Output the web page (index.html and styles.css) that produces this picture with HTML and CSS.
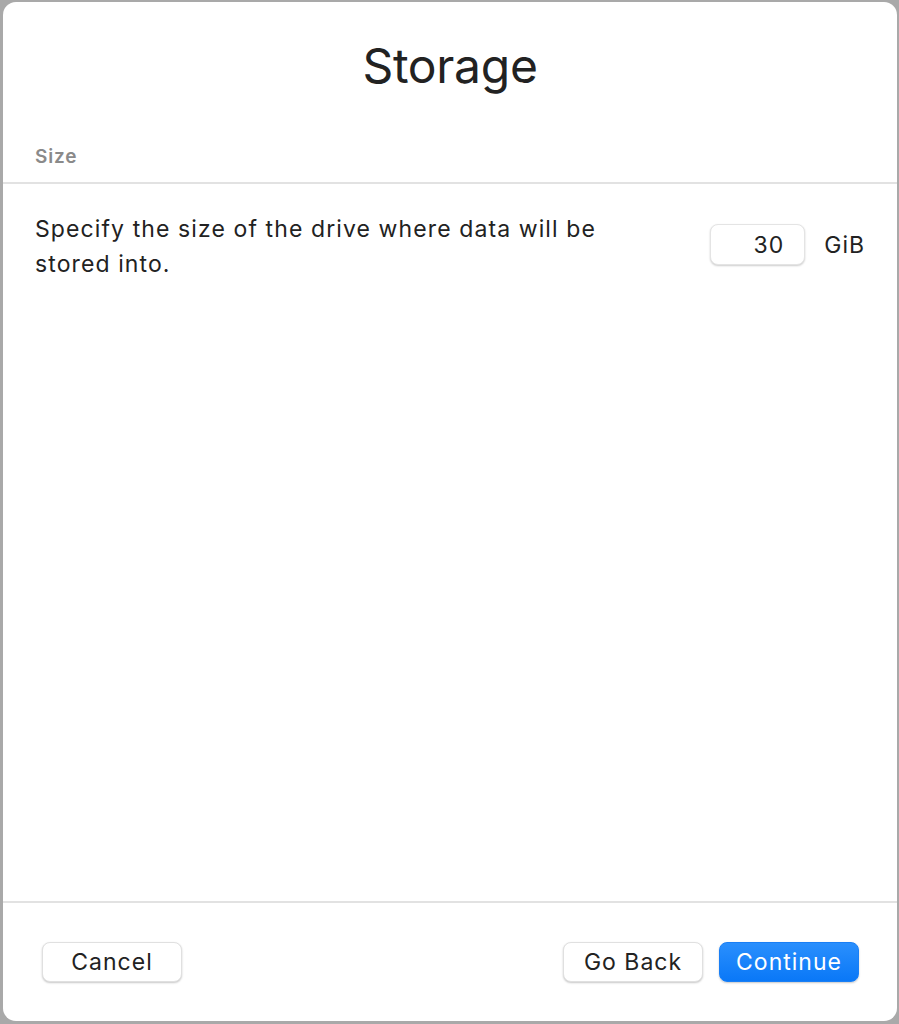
FILE: index.html
```html
<!DOCTYPE html>
<html lang="en">
<head>
    <meta charset="UTF-8">
    <meta name="viewport" content="width=device-width, initial-scale=1.0">
    <title>Storage</title>
    <link rel="stylesheet" href="styles.css">
</head>
<body>
    <div class="window">
        <h1 class="title">Storage</h1>

        <div class="section-label">Size</div>

        <div class="setting-row">
            <p class="setting-text">Specify the size of the drive where data will be stored into.</p>
            <div class="size-field">
                <input class="size-input" type="text" value="30">
                <span class="size-unit">GiB</span>
            </div>
        </div>

        <div class="spacer"></div>

        <div class="footer">
            <button class="btn">Cancel</button>
            <div class="footer-right">
                <button class="btn">Go Back</button>
                <button class="btn btn-primary">Continue</button>
            </div>
        </div>
    </div>
</body>
</html>
```

FILE: styles.css
```css
:root {
    --window-bg: #ffffff;
    --desk-bg: #a9a9a9;
    --text-color: #222222;
    --text-muted: #8a8a8a;
    --line-color: #e2e2e2;
    --accent: #1a84fb;
}

html, body {
    height: 100%;
}

body {
    margin: 0;
    padding: 2px 2px 3px 3px;
    box-sizing: border-box;
    background: var(--desk-bg);
    font-family: 'Inter', 'Liberation Sans', sans-serif;
    color: var(--text-color);
}

.window {
    height: 100%;
    box-sizing: border-box;
    background: var(--window-bg);
    border-radius: 13px;
    display: flex;
    flex-direction: column;
}

.title {
    margin: 0;
    padding-top: 35px;
    text-align: center;
    font-size: 48px;
    font-weight: 400;
    line-height: 58px;
    letter-spacing: -0.3px;
}

.section-label {
    margin-top: 51px;
    padding: 0 32px 14px;
    font-size: 19px;
    font-weight: 600;
    line-height: 22px;
    letter-spacing: 0.8px;
    color: var(--text-muted);
    border-bottom: 2px solid var(--line-color);
}

.setting-row {
    display: flex;
    align-items: flex-start;
    justify-content: space-between;
    padding: 28px 32px 0;
}

.setting-text {
    margin: 0;
    max-width: 590px;
    font-size: 23px;
    line-height: 35px;
    letter-spacing: 1.1px;
}

.size-field {
    display: flex;
    align-items: center;
    gap: 19px;
    margin-top: 12px;
}

.size-input {
    width: 95px;
    height: 41px;
    box-sizing: border-box;
    padding: 0 20px 0 8px;
    border: 1px solid #e4e4e4;
    border-radius: 8px;
    box-shadow: 0 1px 2px rgba(0, 0, 0, 0.2);
    font-family: inherit;
    font-size: 23px;
    letter-spacing: 1px;
    color: var(--text-color);
    text-align: right;
    outline: none;
}

.size-unit {
    font-size: 23px;
    letter-spacing: 1px;
}

.spacer {
    flex: 1;
}

.footer {
    display: flex;
    justify-content: space-between;
    align-items: center;
    padding: 39px 38px 39px 39px;
    border-top: 2px solid var(--line-color);
}

.footer-right {
    display: flex;
    gap: 16px;
}

.btn {
    width: 140px;
    height: 40px;
    border: 1px solid #e0e0e0;
    border-radius: 8px;
    background: #ffffff;
    box-shadow: 0 1px 2px rgba(0, 0, 0, 0.22);
    font-family: inherit;
    font-size: 23px;
    letter-spacing: 1px;
    color: var(--text-color);
    padding: 0;
}

.btn-primary {
    border-color: #1a7ff5;
    background: linear-gradient(to bottom, #2a8ffd, #0a78f7);
    color: #ffffff;
}
```
